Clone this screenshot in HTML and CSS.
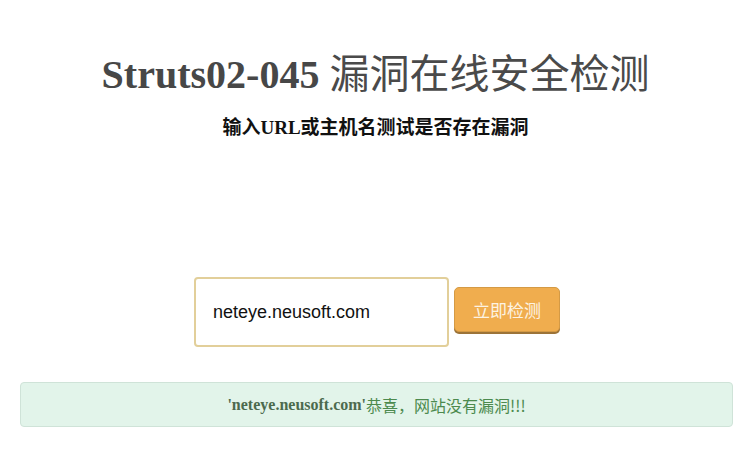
FILE: index.html
```html
<!DOCTYPE html>
<html lang="zh-CN">
<head>
<meta charset="utf-8">
<title>Struts02-045 漏洞在线安全检测</title>
<link rel="stylesheet" href="styles.css">
</head>
<body>
<div class="page">
  <h1 class="title">Struts02-045 <span class="title-cjk">漏洞在线安全检测</span></h1>
  <p class="subtitle">输入URL或主机名测试是否存在漏洞</p>
  <form class="check-form" onsubmit="return false">
    <input class="url-input" type="text" value="neteye.neusoft.com">
    <button class="check-btn" type="submit">立即检测</button>
  </form>
  <div class="alert-success"><b class="alert-host">'neteye.neusoft.com'</b>恭喜，网站没有漏洞!!!</div>
</div>
</body>
</html>
```
FILE: styles.css
```css
html, body {
  margin: 0;
  padding: 0;
  background: #ffffff;
}
.page {
  display: flex;
  flex-direction: column;
  align-items: center;
  font-family: "Liberation Serif", "Noto Sans CJK SC", serif;
}
.title {
  margin: 47px 0 0 0;
  font-size: 40px;
  line-height: 48px;
  font-weight: bold;
  color: #474747;
}
.title-cjk {
  font-weight: normal;
  font-family: "Noto Sans CJK SC", sans-serif;
  font-size: 40px;
  color: #4a4a4a;
}
.subtitle {
  margin: 17px 0 0 0;
  font-size: 19px;
  line-height: 24px;
  font-weight: bold;
  color: #111;
}
.check-form {
  margin: 137px 0 0 3px;
  display: flex;
  align-items: flex-start;
  gap: 5px;
}
.url-input {
  box-sizing: border-box;
  width: 255px;
  height: 70px;
  padding: 0 0 0 17px;
  border: 2px solid #e2cf9a;
  border-radius: 4px;
  font-family: "Liberation Sans", Arial, sans-serif;
  font-size: 18px;
  color: #111;
  background: #fff;
  outline: none;
  margin: 0;
}
.check-btn {
  box-sizing: border-box;
  width: 106px;
  height: 45px;
  border: 1px solid #d49a45;
  border-radius: 5px;
  background: #f0ad4e;
  box-shadow: 0 2px 0 #9c7338;
  color: #fdf3e2;
  font-family: "Noto Sans CJK SC", sans-serif;
  font-size: 17px;
  padding: 0;
  margin: 10px 0 0 0;
}
.alert-success {
  box-sizing: border-box;
  align-self: stretch;
  margin: 35px 18px 0 20px;
  height: 45px;
  display: flex;
  align-items: center;
  justify-content: center;
  background: #e2f4ea;
  border: 1px solid #cfe3d8;
  border-radius: 4px;
  color: #4c8a4e;
  font-family: "Noto Sans CJK SC", sans-serif;
  font-size: 16px;
}
.alert-host {
  font-family: "Liberation Serif", serif;
  font-weight: bold;
  color: #4c6a4e;
  font-size: 16px;
}
```
